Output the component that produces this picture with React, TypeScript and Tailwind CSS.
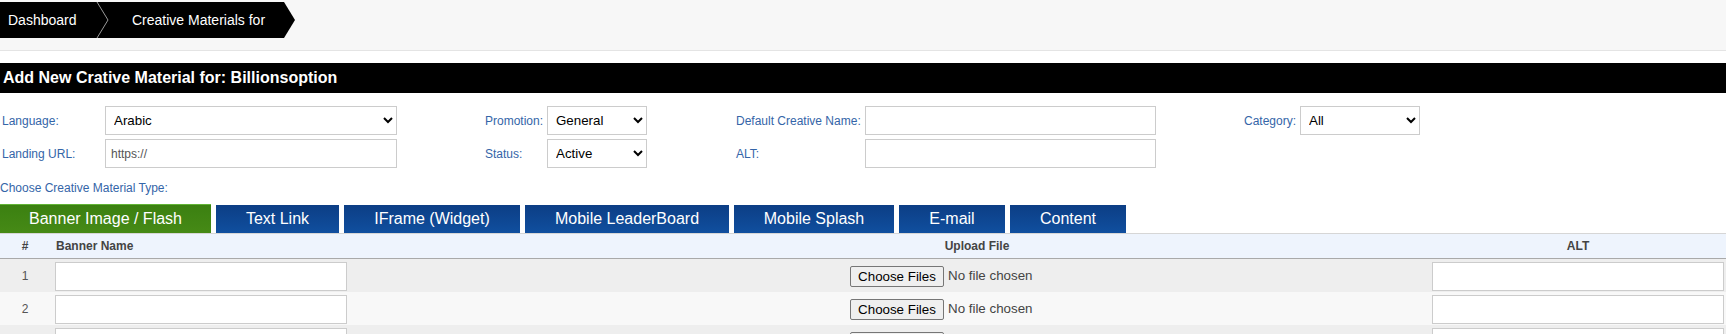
import React from "react";

const font = { fontFamily: '"Liberation Sans", Arial, sans-serif' };

function Label({ children }: { children: React.ReactNode }) {
  return <div className="flex items-center text-[12px] text-[#3465a8] whitespace-nowrap">{children}</div>;
}

function Select({ value, options }: { value: string; options: string[] }) {
  return (
    <select
      defaultValue={value}
      className="h-[29px] w-full border border-[#cccccc] bg-white pl-[4px] text-[13.33px] text-black"
      style={font}
    >
      {options.map((o) => (
        <option key={o}>{o}</option>
      ))}
    </select>
  );
}

function TextInput({ value }: { value?: string }) {
  return (
    <input
      defaultValue={value}
      className="h-[29px] w-full border border-[#cccccc] bg-white pl-[5px] text-[12px] text-[#555]"
      style={font}
    />
  );
}

const tabs = [
  { label: "Text Link", w: "w-[123px]" },
  { label: "IFrame (Widget)", w: "w-[176px]" },
  { label: "Mobile LeaderBoard", w: "w-[204px]" },
  { label: "Mobile Splash", w: "w-[160px]" },
  { label: "E-mail", w: "w-[106px]" },
  { label: "Content", w: "w-[116px]" },
];

function Row({ n, bg }: { n: number; bg: string }) {
  return (
    <div className={`grid h-[33px] grid-cols-[50px_474px_906px_1fr] ${bg}`}>
      <div className="flex items-center justify-center text-[12px] text-[#555]">{n}</div>
      <div className="pl-[5px] pt-[3px]">
        <input className="h-[29px] w-[292px] border border-[#cccccc] bg-white" />
      </div>
      <div className="flex items-center justify-center">
        <div className="flex w-[254px] items-center pt-[1px]">
          <button
            className="h-[21px] w-[94px] rounded-[2px] border border-[#767676] bg-[#efefef] text-[13.33px] text-black"
            style={font}
          >
            Choose Files
          </button>
          <span className="ml-[4px] text-[13.33px] text-[#444]">No file chosen</span>
        </div>
      </div>
      <div className="pl-[2px] pr-[2px] pt-[3px]">
        <input className="h-[29px] w-full border border-[#cccccc] bg-white" />
      </div>
    </div>
  );
}

export default function App() {
  return (
    <div className="h-[334px] w-full overflow-hidden bg-white" style={font}>
      {/* breadcrumb */}
      <div className="h-[51px] border-b border-[#e4e4e4] bg-[#f7f7f7] pt-[2px]">
        <div className="relative flex h-[36px] w-[296px]">
          <div className="flex h-[36px] w-[284px] items-center bg-black text-[14px] text-white">
            <span className="ml-[8px] w-[124px]">Dashboard</span>
            <span>Creative Materials for</span>
          </div>
          <svg width="12" height="36" viewBox="0 0 12 36" className="block">
            <polygon points="0,0 11,18 0,36" fill="#000" />
          </svg>
          <svg width="14" height="36" viewBox="0 0 14 36" className="absolute left-[96px] top-0">
            <polyline points="1,0 12,18 1,36" fill="none" stroke="#9a9a9a" strokeWidth="1" />
          </svg>
        </div>
      </div>

      {/* title bar */}
      <div className="mt-[12px] flex h-[30px] items-center bg-black pl-[3px] text-[16px] font-bold text-white">
        Add New Crative Material for: Billionsoption
      </div>

      {/* form */}
      <div className="mt-[13px] grid grid-cols-[105px_292px_88px_62px_100px_89px_129px_291px_88px_56px_120px] grid-rows-[29px_29px] gap-y-[4px]">
        <div className="pl-[2px] flex"><Label>Language:</Label></div>
        <Select value="Arabic" options={["Arabic", "English"]} />
        <div />
        <Label>Promotion:</Label>
        <Select value="General" options={["General"]} />
        <div />
        <Label>Default Creative Name:</Label>
        <TextInput />
        <div />
        <Label>Category:</Label>
        <Select value="All" options={["All"]} />

        <div className="pl-[2px] flex"><Label>Landing URL:</Label></div>
        <TextInput value="https://" />
        <div />
        <Label>Status:</Label>
        <Select value="Active" options={["Active", "Inactive"]} />
        <div />
        <Label>ALT:</Label>
        <TextInput />
        <div />
        <div />
        <div />
      </div>

      <div className="mt-[13px] h-[14px] text-[12px] leading-[14px] text-[#3465a8]">
        Choose Creative Material Type:
      </div>

      {/* tabs */}
      <div className="mt-[9px] flex h-[29px] items-end gap-[5px]">
        <div className="flex h-[29px] w-[211px] items-center justify-center border-t border-[#62b436] bg-gradient-to-b from-[#3b8011] to-[#468a16] text-[16px] text-white">
          Banner Image / Flash
        </div>
        {tabs.map((t) => (
          <div
            key={t.label}
            className={`flex h-[28px] ${t.w} items-center justify-center bg-gradient-to-b from-[#0c3e85] to-[#104f9f] text-[16px] text-white`}
          >
            {t.label}
          </div>
        ))}
      </div>

      {/* table header */}
      <div className="grid h-[26px] grid-cols-[50px_474px_906px_1fr] border-t border-b border-t-[#d6d6d6] border-b-[#a9a9a9] border-b-dotted bg-[#eef4fd] text-[12px] font-bold text-[#444]">
        <div className="flex items-center justify-center">#</div>
        <div className="flex items-center pl-[6px]">Banner Name</div>
        <div className="flex items-center justify-center">Upload File</div>
        <div className="flex items-center justify-center">ALT</div>
      </div>

      <Row n={1} bg="bg-[#eeeeee]" />
      <Row n={2} bg="bg-[#f8f8f8]" />
      <Row n={3} bg="bg-[#eeeeee]" />
    </div>
  );
}
